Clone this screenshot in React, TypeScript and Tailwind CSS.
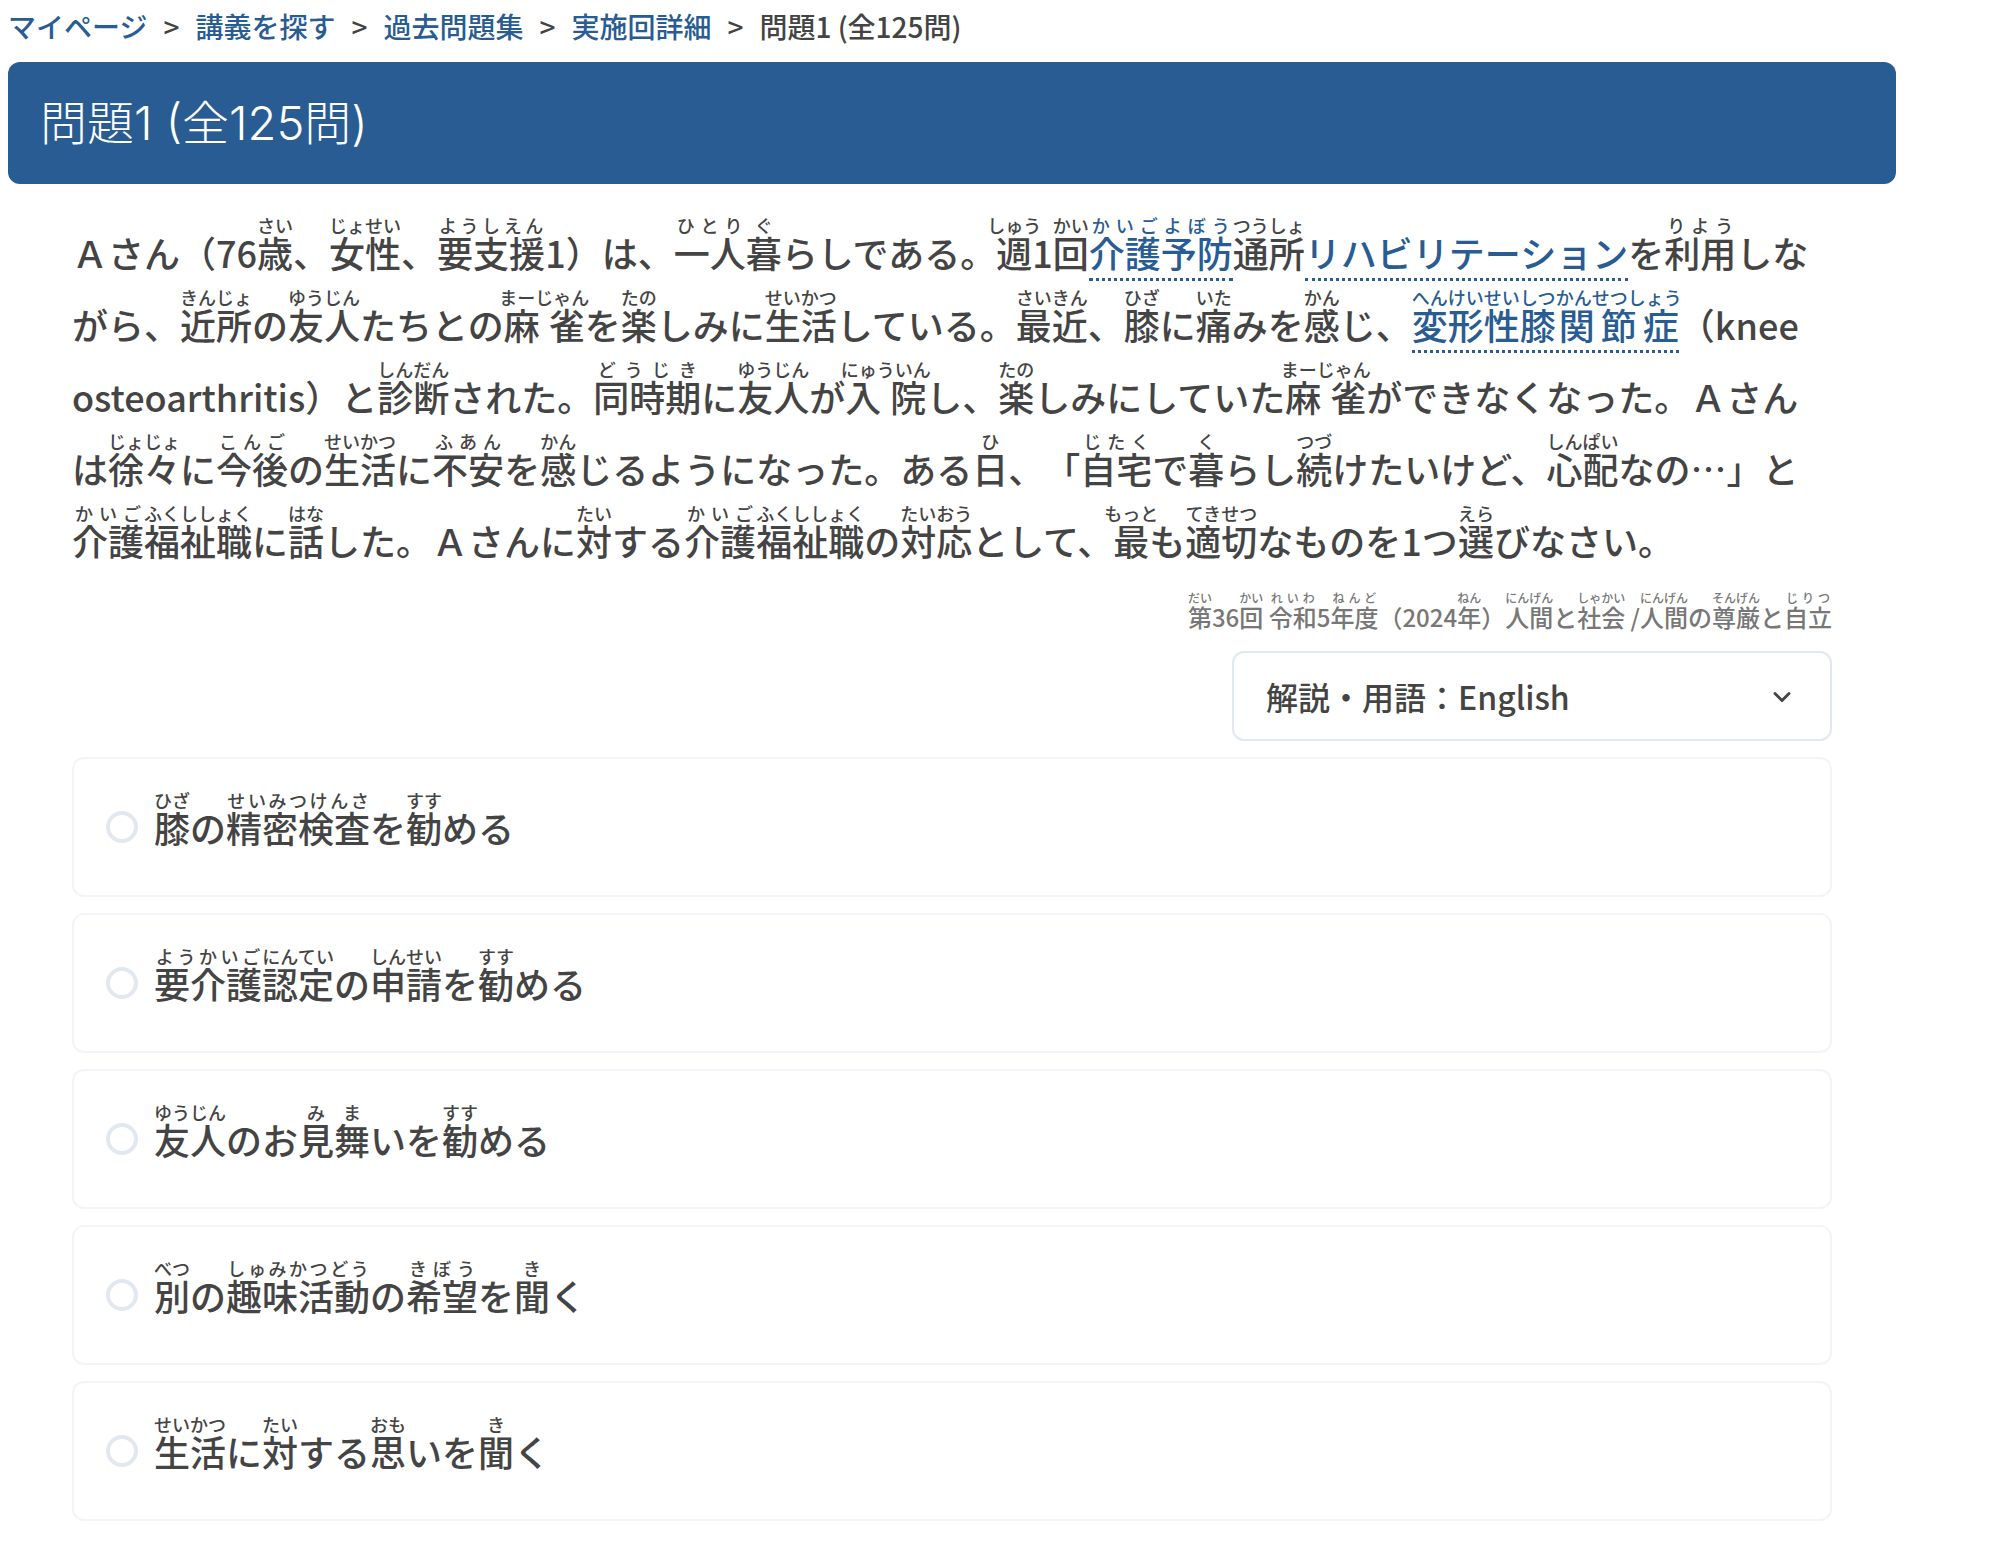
import React, { useState } from 'react';
import { ChevronDown } from 'lucide-react';

// A piece of text: plain string, or [base, reading] for furigana
type Piece = string | [string, string];

type Segment = {
  pieces: Piece[];
  term?: boolean;
};

const breadcrumbs = ["マイページ", "講義を探す", "過去問題集", "実施回詳細"];

const title = "問題1 (全125問)";

const question: Segment[] = [
  {
    pieces: [
      "Ａさん（76", ["歳", "さい"], "、", ["女性", "じょせい"], "、", ["要支援", "ようしえん"],
      "1）は、", ["一人", "ひとり"], ["暮", "ぐ"], "らしである。", ["週", "しゅう"], "1", ["回", "かい"]
    ]
  },
  { term: true, pieces: [["介護", "かいご"], ["予防", "よぼう"]] },
  { pieces: [["通所", "つうしょ"]] },
  { term: true, pieces: ["リハビリテーション"] },
  {
    pieces: [
      "を", ["利用", "りよう"], "しながら、", ["近所", "きんじょ"], "の", ["友人", "ゆうじん"],
      "たちとの", ["麻雀", "まーじゃん"], "を", ["楽", "たの"], "しみに", ["生活", "せいかつ"],
      "している。", ["最近", "さいきん"], "、", ["膝", "ひざ"], "に", ["痛", "いた"], "みを",
      ["感", "かん"], "じ、"
    ]
  },
  { term: true, pieces: [["変形性", "へんけいせい"], ["膝", "しつ"], ["関節症", "かんせつしょう"]] },
  {
    pieces: [
      "（knee osteoarthritis）と", ["診断", "しんだん"], "された。", ["同時期", "どうじき"], "に",
      ["友人", "ゆうじん"], "が", ["入院", "にゅういん"], "し、", ["楽", "たの"], "しみにしていた",
      ["麻雀", "まーじゃん"], "ができなくなった。Ａさんは", ["徐々", "じょじょ"], "に",
      ["今後", "こんご"], "の", ["生活", "せいかつ"], "に", ["不安", "ふあん"], "を",
      ["感", "かん"], "じるようになった。ある", ["日", "ひ"], "、「", ["自宅", "じたく"], "で",
      ["暮", "く"], "らし", ["続", "つづ"], "けたいけど、", ["心配", "しんぱい"], "なの…」と",
      ["介護", "かいご"], ["福祉職", "ふくししょく"], "に", ["話", "はな"], "した。Ａさんに",
      ["対", "たい"], "する", ["介護", "かいご"], ["福祉職", "ふくししょく"], "の",
      ["対応", "たいおう"], "として、", ["最", "もっと"], "も", ["適切", "てきせつ"],
      "なものを1つ", ["選", "えら"], "びなさい。"
    ]
  }
];

const source: Piece[] = [
  ["第", "だい"], "36", ["回", "かい"], " ", ["令和", "れいわ"], "5", ["年度", "ねんど"], "（2024",
  ["年", "ねん"], "）", ["人間", "にんげん"], "と", ["社会", "しゃかい"], " /", ["人間", "にんげん"],
  "の", ["尊厳", "そんげん"], "と", ["自立", "じりつ"]
];

const options: Piece[][] = [
  [["膝", "ひざ"], "の", ["精密検査", "せいみつけんさ"], "を", ["勧", "すす"], "める"],
  [["要介護", "ようかいご"], ["認定", "にんてい"], "の", ["申請", "しんせい"], "を", ["勧", "すす"], "める"],
  [["友人", "ゆうじん"], "のお", ["見", "み"], ["舞", "ま"], "いを", ["勧", "すす"], "める"],
  [["別", "べつ"], "の", ["趣味活動", "しゅみかつどう"], "の", ["希望", "きぼう"], "を", ["聞", "き"], "く"],
  [["生活", "せいかつ"], "に", ["対", "たい"], "する", ["思", "おも"], "いを", ["聞", "き"], "く"]
];

const Furigana = ({ pieces }: { pieces: Piece[] }) => (
  <>
    {pieces.map((piece, index) =>
      typeof piece === 'string' ? (
        <React.Fragment key={index}>{piece}</React.Fragment>
      ) : (
        <ruby key={index}>
          {piece[0]}
          <rt className="text-[50%] leading-none">{piece[1]}</rt>
        </ruby>
      )
    )}
  </>
);

const App = () => {
  const [selected, setSelected] = useState<number | null>(null);

  return (
    <div lang="ja" className="min-h-screen bg-white pl-2 pr-[94px] pb-9 font-['Noto_Sans_CJK_JP',sans-serif] font-medium text-[#444]">
      <nav aria-label="パンくずリスト" className="flex flex-wrap items-center gap-4 pt-1.5 text-[28px] leading-10">
        {breadcrumbs.map((item) => (
          <React.Fragment key={item}>
            <a href="#" className="text-[#285c92] hover:underline">{item}</a>
            <span>&gt;</span>
          </React.Fragment>
        ))}
        <span>{title}</span>
      </nav>

      <h1 className="mt-4 rounded-xl bg-[#285c92] px-8 py-6 font-['Inter','Noto_Sans_CJK_JP',sans-serif] text-[47px] leading-[74px] font-light text-white">
        {title}
      </h1>

      <main className="px-16 pt-8">
        <p className="text-4xl leading-[72px] [text-spacing-trim:space-all]">
          {question.map((segment, index) =>
            segment.term ? (
              <a key={index} href="#" className="border-b-3 border-dotted border-[#285c92] text-[#285c92]">
                <Furigana pieces={segment.pieces} />
              </a>
            ) : (
              <Furigana key={index} pieces={segment.pieces} />
            )
          )}
        </p>

        <p className="mt-4 text-right text-2xl leading-[48px] text-[#777]">
          <Furigana pieces={source} />
        </p>

        <div className="mt-2.5 flex justify-end">
          <div className="relative w-full max-w-[600px]">
            <select
              aria-label="解説・用語の言語"
              className="h-[90px] w-full appearance-none rounded-xl border-2 border-slate-200 bg-white px-8 text-[32px]"
            >
              <option>解説・用語：English</option>
            </select>
            <ChevronDown strokeWidth={2.5} className="pointer-events-none absolute top-8 right-9 h-7 w-7" />
          </div>
        </div>

        <div className="mt-4 flex flex-col gap-4">
          {options.map((option, index) => (
            <label key={index} className="flex items-center gap-4 rounded-xl border-2 border-slate-100 p-8 text-4xl leading-[72px]">
              <input
                type="radio"
                name="answer"
                checked={selected === index}
                onChange={() => setSelected(index)}
                className="h-8 w-8 shrink-0 appearance-none rounded-full border-4 border-slate-200 checked:border-[#285c92]"
              />
              <span>
                <Furigana pieces={option} />
              </span>
            </label>
          ))}
        </div>
      </main>
    </div>
  );
};

export default App;
